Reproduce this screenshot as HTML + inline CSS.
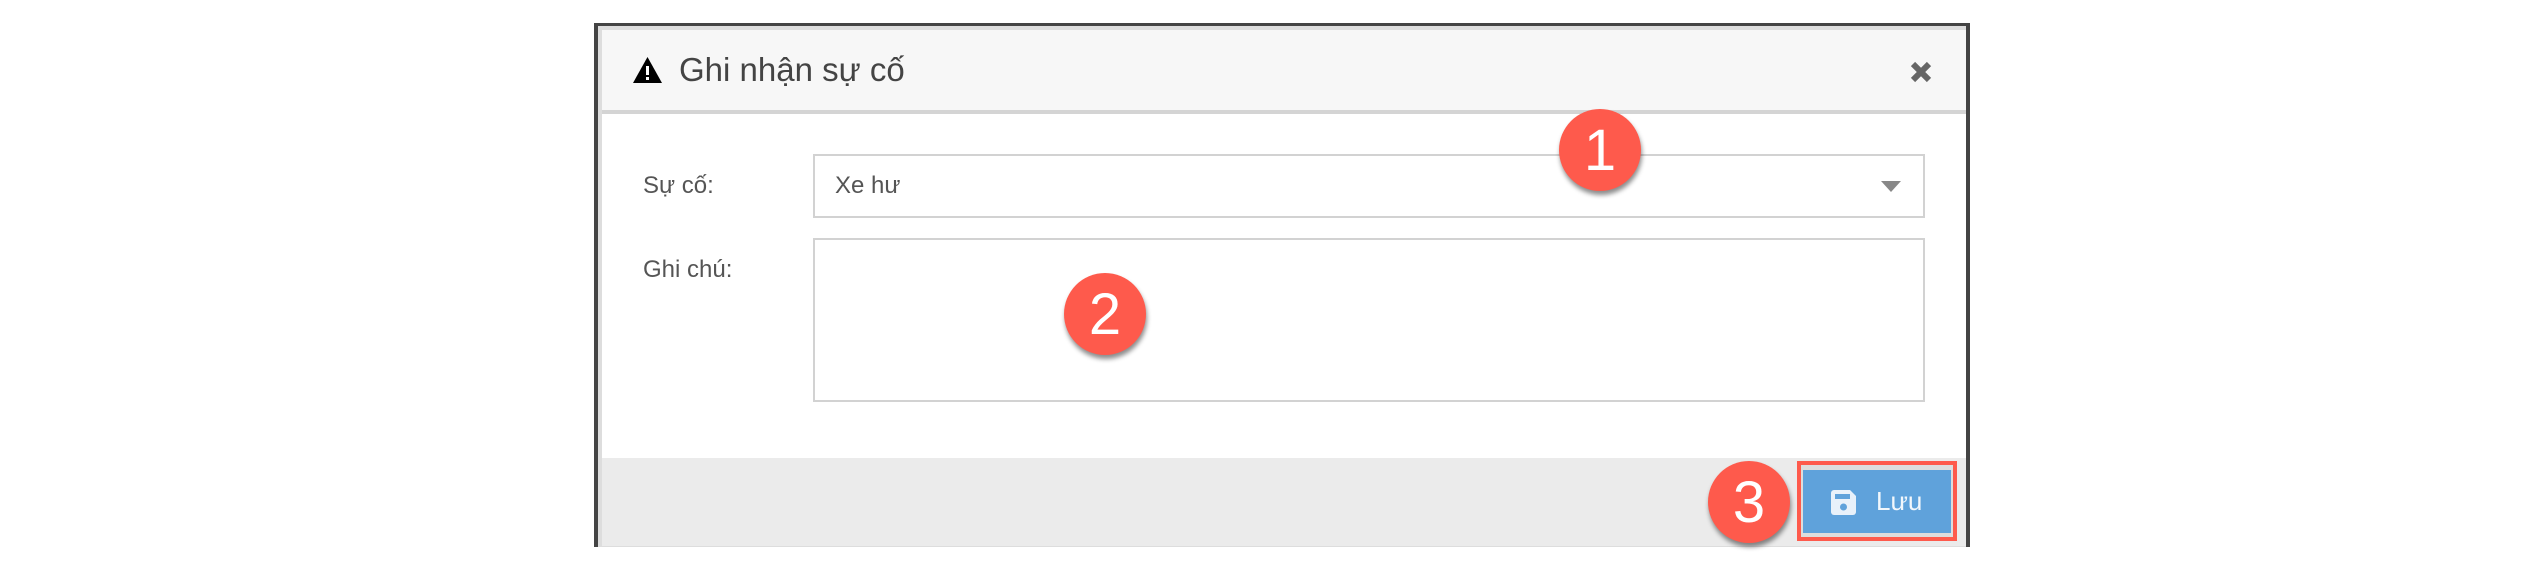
<!DOCTYPE html>
<html><head><meta charset="utf-8"><style>
body{margin:0;width:2544px;height:588px;background:#fff;position:relative;overflow:hidden;font-family:"Liberation Sans","DejaVu Sans",sans-serif}
.a{position:absolute;box-sizing:border-box}
.c{position:absolute;width:82px;height:82px;border-radius:50%;background:#fe5a4c;color:#fff;font-size:58px;text-align:center;line-height:84px;box-shadow:1px 4px 5px rgba(0,0,0,.45)}
</style></head><body>
<div class="a" style="left:594px;top:23px;width:1376px;height:524px;background:#444"></div>
<div class="a" style="left:598px;top:26px;width:1368px;height:521px;background:#ddd"></div>
<div class="a" style="left:602px;top:30px;width:1364px;height:80px;background:#f7f7f7"></div>
<div class="a" style="left:602px;top:110px;width:1364px;height:4px;background:#d4d4d4"></div>
<div class="a" style="left:602px;top:114px;width:1364px;height:344px;background:#fff"></div>
<div class="a" style="left:602px;top:458px;width:1364px;height:88px;background:#ebebeb"></div>
<svg class="a" style="left:633px;top:57px" width="29" height="26" viewBox="0 0 29 26"><path d="M14.5 0L29 26H0Z" fill="#000"/><rect x="13" y="9" width="3" height="9" fill="#fff"/><rect x="13" y="20" width="3" height="3" fill="#fff"/></svg>
<div class="a" style="left:679px;top:50px;font-size:33px;color:#444;line-height:40px">Ghi nhận sự cố</div>
<svg class="a" style="left:1910px;top:61px" width="22" height="22" viewBox="0 0 22 22"><path d="M3 3L19 19M19 3L3 19" stroke="#666" stroke-width="6"/></svg>
<div class="a" style="left:643px;top:172px;font-size:24px;color:#555">Sự cố:</div>
<div class="a" style="left:643px;top:256px;font-size:24px;color:#555">Ghi chú:</div>
<div class="a" style="left:813px;top:154px;width:1112px;height:64px;border:2px solid #d2d2d2;background:#fff"></div>
<div class="a" style="left:835px;top:172px;font-size:24px;color:#555">Xe hư</div>
<svg class="a" style="left:1881px;top:181px" width="20" height="11"><path d="M0 0H20L10 11Z" fill="#888"/></svg>
<div class="a" style="left:813px;top:238px;width:1112px;height:164px;border:2px solid #d2d2d2;background:#fff"></div>
<div class="a" style="left:1797px;top:461px;width:160px;height:80px;background:#fe5a4c"></div>
<div class="a" style="left:1801px;top:465px;width:152px;height:72px;background:#ddd"></div>
<div class="a" style="left:1803px;top:470px;width:148px;height:63px;background:#5fa2db"></div>
<svg class="a" style="left:1831px;top:490px" width="25" height="25" viewBox="0 0 25 25"><path d="M3 0H19L25 6V22A3 3 0 0 1 22 25H3A3 3 0 0 1 0 22V3A3 3 0 0 1 3 0Z" fill="#e8f1fa"/><rect x="4" y="4" width="15" height="5" fill="#5fa2db"/><circle cx="12.5" cy="17" r="3.5" fill="#5fa2db"/></svg>
<div class="a" style="left:1876px;top:486px;font-size:26px;color:#f2f7fc">Lưu</div>
<div class="c" style="left:1559px;top:109px">1</div>
<div class="c" style="left:1064px;top:273px">2</div>
<div class="c" style="left:1708px;top:461px">3</div>
</body></html>
